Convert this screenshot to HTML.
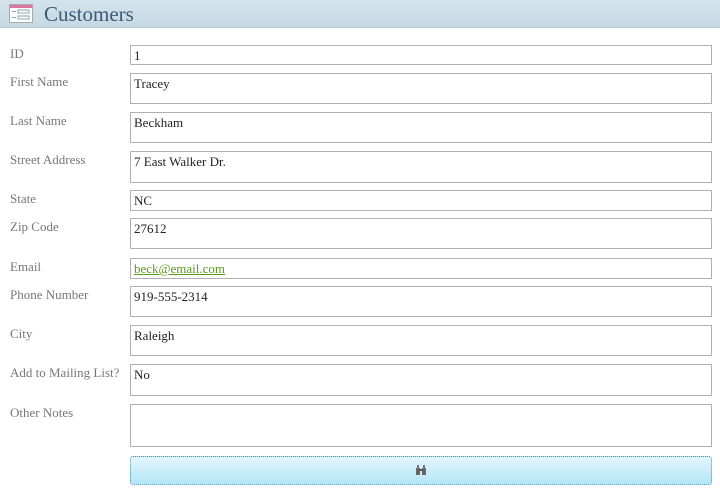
<!DOCTYPE html>
<html><head><style>
body{margin:0;width:720px;height:498px;background:#fff;position:relative;overflow:hidden;font-family:"Liberation Serif",serif;font-size:13px}
.hd{position:absolute;left:0;top:0;width:720px;height:27px;background:linear-gradient(#d3e3ec,#c6d9e4);border-bottom:1px solid #b8ccd8}
.hd span{position:absolute;left:44px;top:2px;font-size:21px;color:#3b5a73}
.lb{position:absolute;left:10px;color:#777}
.bx{position:absolute;left:130px;width:582px;border:1px solid #b0b0b0;box-sizing:border-box;color:#222;padding:2px 0 0 3px}
.btn{position:absolute;left:130px;top:456px;width:582px;height:29px;box-sizing:border-box;border:1px dotted #4a90b0;border-radius:3px;background:linear-gradient(#e4f6fd,#b4e6f8)}
</style></head><body>
<div class="hd">
<svg style="position:absolute;left:9px;top:4px" width="24" height="19"><rect x="0.5" y="0.5" width="23" height="18" fill="#fff" stroke="#aaa"/><rect x="1" y="1" width="22" height="3" fill="#d9779f"/><rect x="9" y="6" width="11" height="3" fill="none" stroke="#8aa"/><rect x="9" y="12" width="11" height="3" fill="none" stroke="#8aa"/><line x1="3" y1="7.5" x2="7" y2="7.5" stroke="#8aa"/><line x1="3" y1="13.5" x2="7" y2="13.5" stroke="#8aa"/></svg>
<span>Customers</span></div>
<div class="lb" style="top:46px">ID</div><div class="bx" style="top:45px;height:20px">1</div>
<div class="lb" style="top:74px">First Name</div><div class="bx" style="top:73px;height:31px">Tracey</div>
<div class="lb" style="top:113px">Last Name</div><div class="bx" style="top:112px;height:31px">Beckham</div>
<div class="lb" style="top:152px">Street Address</div><div class="bx" style="top:151px;height:32px">7 East Walker Dr.</div>
<div class="lb" style="top:191px">State</div><div class="bx" style="top:190px;height:21px">NC</div>
<div class="lb" style="top:219px">Zip Code</div><div class="bx" style="top:218px;height:31px">27612</div>
<div class="lb" style="top:259px">Email</div><div class="bx" style="top:258px;height:21px;color:#5a9a1a;text-decoration:underline">beck@email.com</div>
<div class="lb" style="top:287px">Phone Number</div><div class="bx" style="top:286px;height:31px">919-555-2314</div>
<div class="lb" style="top:326px">City</div><div class="bx" style="top:325px;height:31px">Raleigh</div>
<div class="lb" style="top:365px">Add to Mailing List?</div><div class="bx" style="top:364px;height:32px">No</div>
<div class="lb" style="top:405px">Other Notes</div><div class="bx" style="top:404px;height:43px"></div>
<div class="btn"><svg style="position:absolute;left:284px;top:8px" width="12" height="10"><rect x="1" y="3" width="4" height="7" fill="#666"/><rect x="7" y="3" width="4" height="7" fill="#666"/><rect x="2" y="0" width="2" height="4" fill="#777"/><rect x="8" y="0" width="2" height="4" fill="#777"/><rect x="4" y="4" width="4" height="2" fill="#555"/></svg></div>
</body></html>
